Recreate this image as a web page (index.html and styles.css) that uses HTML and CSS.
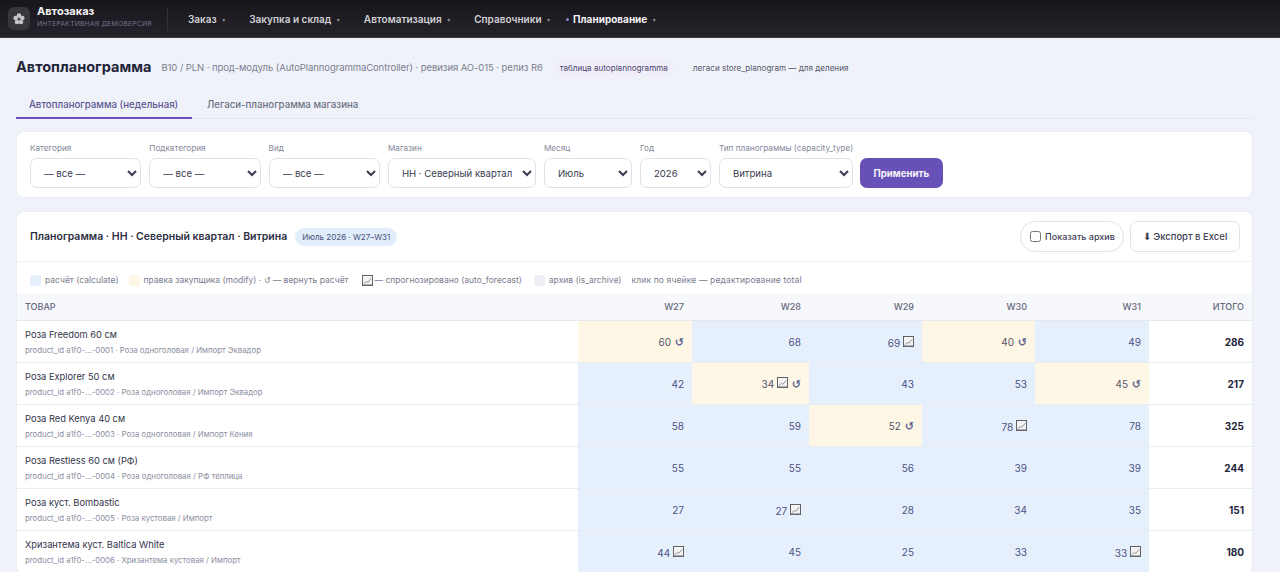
FILE: index.html
```html
<!DOCTYPE html>
<html lang="ru">
<head>
    <meta charset="UTF-8">
    <title>Автопланограмма</title>
    <link rel="stylesheet" href="styles.css">
</head>
<body>
    <svg class="defs" width="0" height="0">
        <symbol id="forecast" viewBox="0 0 12 12">
            <rect x="0.5" y="0.5" width="11" height="11" fill="#f4f4f4" stroke="#55565c"/>
            <path d="M2 9.5 L5 7 L6.5 8 L10 3.5" fill="none" stroke="#8a8b90" stroke-width="1"/>
            <path d="M1 10.5 H11" stroke="#9a9ba0"/>
        </symbol>
    </svg>

    <header class="topbar">
        <div class="brand">
            <div class="brand-icon">
                <svg width="12" height="12" viewBox="0 0 12 12">
                    <g fill="#c4c4ca">
                        <circle cx="6" cy="2.6" r="2.3"/>
                        <circle cx="9.3" cy="5" r="2.3"/>
                        <circle cx="8" cy="9" r="2.3"/>
                        <circle cx="4" cy="9" r="2.3"/>
                        <circle cx="2.7" cy="5" r="2.3"/>
                    </g>
                    <circle cx="6" cy="6.2" r="1.2" fill="#4a4a50"/>
                </svg>
            </div>
            <div>
                <div class="brand-name">Автозаказ</div>
                <div class="brand-sub">ИНТЕРАКТИВНАЯ ДЕМОВЕРСИЯ</div>
            </div>
        </div>
        <nav class="nav">
            <a class="nav-item">Заказ <i>▾</i></a>
            <a class="nav-item">Закупка и склад <i>▾</i></a>
            <a class="nav-item">Автоматизация <i>▾</i></a>
            <a class="nav-item">Справочники <i>▾</i></a>
            <a class="nav-item active"><b class="dot"></b>Планирование <i>▾</i></a>
        </nav>
    </header>

    <main class="page">
        <div class="title-row">
            <h1>Автопланограмма</h1>
            <span class="title-meta">B10 / PLN · прод-модуль (AutoPlannogrammaController) · ревизия АО-015 · релиз R6</span>
            <span class="tag tag-purple">таблица autoplannogramma</span>
            <span class="tag">легаси store_planogram — для деления</span>
        </div>

        <div class="tabs">
            <a class="tab active">Автопланограмма (недельная)</a>
            <a class="tab">Легаси-планограмма магазина</a>
        </div>

        <form class="card filters">
            <div class="field f-cat">
                <label>Категория</label>
                <select><option>— все —</option></select>
            </div>
            <div class="field f-cat">
                <label>Подкатегория</label>
                <select><option>— все —</option></select>
            </div>
            <div class="field f-cat">
                <label>Вид</label>
                <select><option>— все —</option></select>
            </div>
            <div class="field f-store">
                <label>Магазин</label>
                <select><option>НН · Северный квартал</option></select>
            </div>
            <div class="field f-month">
                <label>Месяц</label>
                <select><option>Июль</option></select>
            </div>
            <div class="field f-year">
                <label>Год</label>
                <select><option>2026</option></select>
            </div>
            <div class="field f-type">
                <label>Тип планограммы (capacity_type)</label>
                <select><option>Витрина</option></select>
            </div>
            <button type="button" class="apply">Применить</button>
        </form>

        <section class="card grid-card">
            <div class="grid-head">
                <h2>Планограмма · НН · Северный квартал · Витрина</h2>
                <span class="period">Июль 2026 · W27–W31</span>
                <div class="grid-actions">
                    <label class="archive"><input type="checkbox"> Показать архив</label>
                    <button type="button" class="export">⬇ Экспорт в Excel</button>
                </div>
            </div>

            <div class="legend">
                <span class="legend-item"><i class="swatch calc"></i>расчёт (calculate)</span>
                <span class="legend-item"><i class="swatch mod"></i>правка закупщика (modify) · <span class="undo-sm">↺</span> — вернуть расчёт</span>
                <span class="legend-item legend-fc"><svg class="fc"><use href="#forecast"/></svg>— спрогнозировано (auto_forecast)</span>
                <span class="legend-item legend-arch"><i class="swatch arch"></i>архив (is_archive)</span>
                <span class="legend-item legend-hint">клик по ячейке — редактирование total</span>
            </div>

            <table>
                <colgroup>
                    <col class="c-name"><col class="c-w1"><col class="c-w2"><col class="c-w3"><col class="c-w4"><col class="c-w5"><col>
                </colgroup>
                <thead>
                    <tr><th>ТОВАР</th><th>W27</th><th>W28</th><th>W29</th><th>W30</th><th>W31</th><th>ИТОГО</th></tr>
                </thead>
                <tbody>
                    <tr>
                        <td class="name">Роза Freedom 60 см<small>product_id a1f0-…-0001 · Роза одноголовая / Импорт Эквадор</small></td>
                        <td class="mod">60 <span class="undo">↺</span></td>
                        <td class="calc">68</td>
                        <td class="calc">69 <svg class="fc up"><use href="#forecast"/></svg></td>
                        <td class="mod">40 <span class="undo">↺</span></td>
                        <td class="calc">49</td>
                        <td class="total">286</td>
                    </tr>
                    <tr>
                        <td class="name">Роза Explorer 50 см<small>product_id a1f0-…-0002 · Роза одноголовая / Импорт Эквадор</small></td>
                        <td class="calc">42</td>
                        <td class="mod">34 <svg class="fc up"><use href="#forecast"/></svg> <span class="undo">↺</span></td>
                        <td class="calc">43</td>
                        <td class="calc">53</td>
                        <td class="mod">45 <span class="undo">↺</span></td>
                        <td class="total">217</td>
                    </tr>
                    <tr>
                        <td class="name">Роза Red Kenya 40 см<small>product_id a1f0-…-0003 · Роза одноголовая / Импорт Кения</small></td>
                        <td class="calc">58</td>
                        <td class="calc">59</td>
                        <td class="mod">52 <span class="undo">↺</span></td>
                        <td class="calc">78 <svg class="fc up"><use href="#forecast"/></svg></td>
                        <td class="calc">78</td>
                        <td class="total">325</td>
                    </tr>
                    <tr>
                        <td class="name">Роза Restless 60 см (РФ)<small>product_id a1f0-…-0004 · Роза одноголовая / РФ теплица</small></td>
                        <td class="calc">55</td>
                        <td class="calc">55</td>
                        <td class="calc">56</td>
                        <td class="calc">39</td>
                        <td class="calc">39</td>
                        <td class="total">244</td>
                    </tr>
                    <tr>
                        <td class="name">Роза куст. Bombastic<small>product_id a1f0-…-0005 · Роза кустовая / Импорт</small></td>
                        <td class="calc">27</td>
                        <td class="calc">27 <svg class="fc up"><use href="#forecast"/></svg></td>
                        <td class="calc">28</td>
                        <td class="calc">34</td>
                        <td class="calc">35</td>
                        <td class="total">151</td>
                    </tr>
                    <tr>
                        <td class="name">Хризантема куст. Baltica White<small>product_id a1f0-…-0006 · Хризантема кустовая / Импорт</small></td>
                        <td class="calc">44 <svg class="fc up"><use href="#forecast"/></svg></td>
                        <td class="calc">45</td>
                        <td class="calc">25</td>
                        <td class="calc">33</td>
                        <td class="calc">33 <svg class="fc up"><use href="#forecast"/></svg></td>
                        <td class="total">180</td>
                    </tr>
                </tbody>
            </table>
        </section>
    </main>
</body>
</html>
```

FILE: styles.css
```css
:root {
    --page-bg: #f0f2f9;
    --text: #2a2c3f;
    --muted: #858899;
    --border: #e4e6ef;
    --accent: #6750b8;
    --calc: #e6f0fc;
    --mod: #fff7e6;
}

* {
    box-sizing: border-box;
    margin: 0;
    padding: 0;
}

body {
    font-family: Inter, "Noto Sans", sans-serif;
    background: var(--page-bg);
    color: var(--text);
    font-size: 10px;
    height: 572px;
    overflow: hidden;
}

.defs {
    display: block;
    height: 0;
}

/* top bar */
.topbar {
    height: 38px;
    background: linear-gradient(180deg, #17161b 0%, #26242b 100%);
    display: flex;
    align-items: center;
    padding-left: 8px;
    border-bottom: 1px solid #3c3c42;
}

.brand {
    display: flex;
    align-items: center;
    gap: 7px;
    width: 160px;
    height: 24px;
    border-right: 1px solid #333238;
}

.brand-icon {
    width: 22px;
    height: 23px;
    background: #38373d;
    border-radius: 6px;
    display: flex;
    align-items: center;
    justify-content: center;
}

.brand-name {
    color: #f4f4f6;
    font-size: 11px;
    font-weight: 700;
    line-height: 12px;
    margin-top: -4px;
}

.brand-sub {
    color: #73758c;
    font-size: 6.8px;
    line-height: 9px;
    margin-top: 2px;
    letter-spacing: 0.2px;
    white-space: nowrap;
}

.nav {
    display: flex;
    align-items: center;
    margin-left: 20px;
    gap: 24px;
}

.nav-item {
    color: #d0d0d5;
    font-size: 10px;
    font-weight: 600;
    white-space: nowrap;
}

.nav-item i {
    font-family: "DejaVu Sans", sans-serif;
    font-style: normal;
    font-size: 6px;
    color: #8d8d94;
    margin-left: 3px;
    vertical-align: 1px;
}

.nav-item.active {
    color: #f2f2f5;
    font-weight: 700;
    margin-left: -8px;
}

.dot {
    display: inline-block;
    width: 3px;
    height: 3px;
    border-radius: 50%;
    background: #8f7fd0;
    margin-right: 4px;
    vertical-align: 2px;
}

/* page */
.page {
    padding: 18px 27px 0 16px;
}

.title-row {
    display: flex;
    align-items: center;
    height: 20px;
}

h1 {
    font-size: 14.5px;
    font-weight: 700;
    color: #23253a;
    margin-right: 10px;
}

.title-meta {
    color: #7b7e90;
    font-size: 9.5px;
    margin-right: 11px;
    margin-top: 3px;
    letter-spacing: -0.08px;
}

.tag {
    font-size: 8.1px;
    padding: 3px 6px;
    border-radius: 9px;
    color: #55586b;
    margin-right: 13px;
    margin-top: 4px;
}

.tag-purple {
    background: #f1eefb;
    color: #4a4468;
}

.tabs {
    display: flex;
    margin-top: 17px;
    height: 26px;
    border-bottom: 1px solid var(--border);
}

.tab {
    padding: 6px 13px 0;
    color: #6d7082;
    font-size: 9.7px;
    font-weight: 500;
    height: 26px;
    margin-right: 2px;
}

.tab.active {
    color: #5b5590;
    min-width: 176px;
    border-bottom: 2px solid var(--accent);
}

.card {
    background: #fff;
    border-radius: 8px;
    border: 1px solid #eceef5;
}

/* filters */
.filters {
    margin-top: 12px;
    height: 67px;
    padding: 10px 13px 9px;
    display: flex;
    align-items: flex-end;
    gap: 8px;
}

.field label {
    display: block;
    color: #85889a;
    font-size: 8.2px;
    line-height: 11px;
    margin-bottom: 4px;
    white-space: nowrap;
}

.field select {
    width: 100%;
    height: 30px;
    font-family: inherit;
    font-size: 9.6px;
    color: #3a3c50;
    background: #fff;
    border: 1px solid #dfe2ec;
    border-radius: 7px;
    padding-left: 9px;
}

.f-cat { width: 111.3px; }
.f-store { width: 148px; }
.f-month { width: 88px; }
.f-year { width: 71px; }
.f-type { width: 134px; }

.apply {
    height: 30px;
    width: 83px;
    margin-left: -1px;
    background: var(--accent);
    color: #f4f2fb;
    border: none;
    border-radius: 7px;
    font-family: inherit;
    font-size: 9.7px;
    font-weight: 700;
}

/* grid */
.grid-card {
    margin-top: 13px;
    overflow: hidden;
}

.grid-head {
    height: 50px;
    display: flex;
    align-items: center;
    padding: 0 12px 0 13px;
    border-bottom: 1px solid #eef0f6;
}

h2 {
    font-size: 10.5px;
    font-weight: 600;
    color: #2d2f44;
    margin-right: 8px;
}

.period {
    background: #e2edfb;
    color: #48527a;
    font-size: 8px;
    padding: 4px 7px;
    border-radius: 9px;
}

.grid-actions {
    margin-left: auto;
    display: flex;
    gap: 6px;
}

.archive {
    height: 31px;
    width: 104px;
    border: 1px solid #e0e3ec;
    border-radius: 15px;
    display: flex;
    align-items: center;
    gap: 3px;
    padding-left: 9px;
    font-size: 9px;
    font-weight: 500;
    color: #3f4155;
}

.archive input {
    width: 11px;
    height: 11px;
    margin-right: 1px;
}

.export {
    height: 31px;
    width: 110px;
    background: #fff;
    border: 1px solid #e0e3ec;
    border-radius: 7px;
    font-family: inherit;
    font-size: 9.5px;
    font-weight: 500;
    color: #3f4155;
}

.legend {
    height: 31px;
    display: flex;
    align-items: center;
    padding: 5px 0 0 13px;
    gap: 10px;
    color: #797c8e;
    font-size: 8.5px;
}

.legend-item {
    display: flex;
    align-items: center;
    white-space: pre;
}

.legend-fc {
    margin-left: 3px;
}

.legend-arch {
    margin-left: 2px;
}

.legend-hint {
    letter-spacing: 0.14px;
}

.swatch {
    width: 11px;
    height: 11px;
    border-radius: 2px;
    margin-right: 4px;
}

.swatch.calc { background: var(--calc); }
.swatch.mod { background: var(--mod); }
.swatch.arch { background: #eef0f5; }

.undo-sm {
    font-family: "DejaVu Sans", sans-serif;
    font-size: 8px;
}

.legend .fc {
    margin-right: 2px;
}

table {
    width: 100%;
    border-collapse: collapse;
    table-layout: fixed;
}

.c-name { width: 561px; }
.c-w1 { width: 114px; }
.c-w2 { width: 117px; }
.c-w3 { width: 113px; }
.c-w4 { width: 113px; }
.c-w5 { width: 114px; }

th {
    height: 27px;
    background: #f7f8fc;
    border-bottom: 1px solid #e6e8f0;
    font-size: 9px;
    font-weight: 500;
    color: #64677a;
    text-align: right;
    padding-right: 8px;
}

th:first-child {
    text-align: left;
    padding-left: 8px;
}

td {
    height: 42px;
    text-align: right;
    padding: 2px 8px 0 0;
    font-size: 10px;
    color: #4c5285;
    border-bottom: 1px solid #eaecf3;
}

td.name {
    text-align: left;
    padding: 2px 0 0 8px;
    color: #33354a;
    font-size: 9.3px;
    line-height: 13px;
}

td.name small {
    display: block;
    font-size: 7.8px;
    color: #8b8e9f;
    margin-top: 4px;
    line-height: 11px;
}

td.calc { background: var(--calc); }
td.mod {
    background: var(--mod);
    color: #55566a;
}

td.total {
    font-weight: 700;
    color: #23253a;
}

.undo {
    font-family: "DejaVu Sans", sans-serif;
    font-size: 11px;
    font-weight: 700;
    color: #5a6490;
    margin-left: 1px;
}

.fc {
    width: 11px;
    height: 11px;
    flex: none;
}

.fc.up {
    vertical-align: 0;
}
```
